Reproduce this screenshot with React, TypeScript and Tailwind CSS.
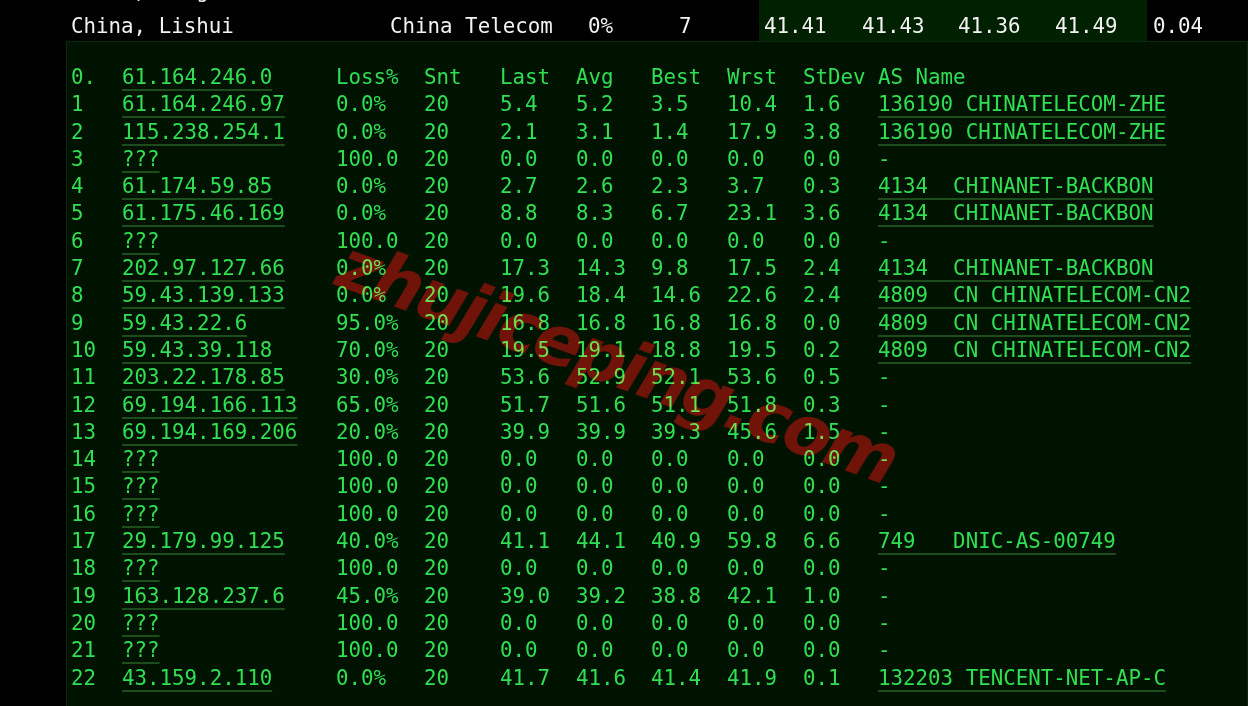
import React from 'react';

type Hop = {
  n: string;
  host: string;
  loss: string;
  snt: string;
  last: string;
  avg: string;
  best: string;
  wrst: string;
  stdev: string;
  as: string;
};

const hops: Hop[] = [
  { n: '1', host: '61.164.246.97', loss: '0.0%', snt: '20', last: '5.4', avg: '5.2', best: '3.5', wrst: '10.4', stdev: '1.6', as: '136190 CHINATELECOM-ZHE' },
  { n: '2', host: '115.238.254.1', loss: '0.0%', snt: '20', last: '2.1', avg: '3.1', best: '1.4', wrst: '17.9', stdev: '3.8', as: '136190 CHINATELECOM-ZHE' },
  { n: '3', host: '???', loss: '100.0', snt: '20', last: '0.0', avg: '0.0', best: '0.0', wrst: '0.0', stdev: '0.0', as: '' },
  { n: '4', host: '61.174.59.85', loss: '0.0%', snt: '20', last: '2.7', avg: '2.6', best: '2.3', wrst: '3.7', stdev: '0.3', as: '4134  CHINANET-BACKBON' },
  { n: '5', host: '61.175.46.169', loss: '0.0%', snt: '20', last: '8.8', avg: '8.3', best: '6.7', wrst: '23.1', stdev: '3.6', as: '4134  CHINANET-BACKBON' },
  { n: '6', host: '???', loss: '100.0', snt: '20', last: '0.0', avg: '0.0', best: '0.0', wrst: '0.0', stdev: '0.0', as: '' },
  { n: '7', host: '202.97.127.66', loss: '0.0%', snt: '20', last: '17.3', avg: '14.3', best: '9.8', wrst: '17.5', stdev: '2.4', as: '4134  CHINANET-BACKBON' },
  { n: '8', host: '59.43.139.133', loss: '0.0%', snt: '20', last: '19.6', avg: '18.4', best: '14.6', wrst: '22.6', stdev: '2.4', as: '4809  CN CHINATELECOM-CN2' },
  { n: '9', host: '59.43.22.6', loss: '95.0%', snt: '20', last: '16.8', avg: '16.8', best: '16.8', wrst: '16.8', stdev: '0.0', as: '4809  CN CHINATELECOM-CN2' },
  { n: '10', host: '59.43.39.118', loss: '70.0%', snt: '20', last: '19.5', avg: '19.1', best: '18.8', wrst: '19.5', stdev: '0.2', as: '4809  CN CHINATELECOM-CN2' },
  { n: '11', host: '203.22.178.85', loss: '30.0%', snt: '20', last: '53.6', avg: '52.9', best: '52.1', wrst: '53.6', stdev: '0.5', as: '' },
  { n: '12', host: '69.194.166.113', loss: '65.0%', snt: '20', last: '51.7', avg: '51.6', best: '51.1', wrst: '51.8', stdev: '0.3', as: '' },
  { n: '13', host: '69.194.169.206', loss: '20.0%', snt: '20', last: '39.9', avg: '39.9', best: '39.3', wrst: '45.6', stdev: '1.5', as: '' },
  { n: '14', host: '???', loss: '100.0', snt: '20', last: '0.0', avg: '0.0', best: '0.0', wrst: '0.0', stdev: '0.0', as: '' },
  { n: '15', host: '???', loss: '100.0', snt: '20', last: '0.0', avg: '0.0', best: '0.0', wrst: '0.0', stdev: '0.0', as: '' },
  { n: '16', host: '???', loss: '100.0', snt: '20', last: '0.0', avg: '0.0', best: '0.0', wrst: '0.0', stdev: '0.0', as: '' },
  { n: '17', host: '29.179.99.125', loss: '40.0%', snt: '20', last: '41.1', avg: '44.1', best: '40.9', wrst: '59.8', stdev: '6.6', as: '749   DNIC-AS-00749' },
  { n: '18', host: '???', loss: '100.0', snt: '20', last: '0.0', avg: '0.0', best: '0.0', wrst: '0.0', stdev: '0.0', as: '' },
  { n: '19', host: '163.128.237.6', loss: '45.0%', snt: '20', last: '39.0', avg: '39.2', best: '38.8', wrst: '42.1', stdev: '1.0', as: '' },
  { n: '20', host: '???', loss: '100.0', snt: '20', last: '0.0', avg: '0.0', best: '0.0', wrst: '0.0', stdev: '0.0', as: '' },
  { n: '21', host: '???', loss: '100.0', snt: '20', last: '0.0', avg: '0.0', best: '0.0', wrst: '0.0', stdev: '0.0', as: '' },
  { n: '22', host: '43.159.2.110', loss: '0.0%', snt: '20', last: '41.7', avg: '41.6', best: '41.4', wrst: '41.9', stdev: '0.1', as: '132203 TENCENT-NET-AP-C' },
];

const cols = 'grid grid-cols-[51px_214px_88px_76px_76px_75px_76px_76px_75px_1fr]';
const link = 'underline decoration-[#1d4d1d] decoration-2 underline-offset-[5px]';

const TopRow = ({ cells, h }: { cells: string[]; h: string }) => (
  <div className={`flex whitespace-pre pl-[66px] shrink-0 ${h}`}>
    <div className="w-[319px] pl-[5px]">{cells[0]}</div>
    <div className="w-[198px] pl-[5px]">{cells[1]}</div>
    <div className="w-[91px] pl-[5px]">{cells[2]}</div>
    <div className="w-[85px] pl-[5px]">{cells[3]}</div>
    <div className="w-[98px] pl-[5px] bg-[#002100]">{cells[4]}</div>
    <div className="w-[96px] pl-[5px] bg-[#002100]">{cells[5]}</div>
    <div className="w-[97px] pl-[5px] bg-[#002100]">{cells[6]}</div>
    <div className="w-[97px] pl-[5px] bg-[#002100]">{cells[7]}</div>
    <div className="flex-1 pl-[6px]">{cells[8]}</div>
  </div>
);

export default function App() {
  return (
    <div className="relative h-[706px] w-[1248px] overflow-hidden bg-black font-['DejaVu_Sans_Mono',monospace] text-[20.8px]">
      <div className="flex h-[41px] flex-col justify-end overflow-hidden text-[#f2f2f2]">
        <TopRow h="h-[30px] leading-[30px]" cells={['China, Hangzhou', 'China Telecom', '0%', '7', '41.52', '41.50', '41.44', '41.58', '0.03']} />
        <TopRow h="h-[35px] leading-[30px] [&>div]:pt-[5px]" cells={['China, Lishui', 'China Telecom', '0%', '7', '41.41', '41.43', '41.36', '41.49', '0.04']} />
      </div>

      <div className="ml-[66px] h-[700px] border border-[#0b2a0b] bg-[#001300] pl-[4px] pt-[22px] text-[#31df52] leading-[27.3px]">
        <div className={`${cols} whitespace-pre`}>
          <div>0.</div>
          <div><span className={link}>61.164.246.0</span></div>
          <div>Loss%</div>
          <div>Snt</div>
          <div>Last</div>
          <div>Avg</div>
          <div>Best</div>
          <div>Wrst</div>
          <div>StDev</div>
          <div>AS Name</div>
        </div>
        {hops.map((h) => (
          <div key={h.n} className={`${cols} whitespace-pre`}>
            <div>{h.n}</div>
            <div><span className={link}>{h.host}</span></div>
            <div>{h.loss}</div>
            <div>{h.snt}</div>
            <div>{h.last}</div>
            <div>{h.avg}</div>
            <div>{h.best}</div>
            <div>{h.wrst}</div>
            <div>{h.stdev}</div>
            <div>{h.as ? <span className={link}>{h.as}</span> : '-'}</div>
          </div>
        ))}
      </div>

      <div className="pointer-events-none absolute left-[617px] top-[362px] -translate-x-1/2 -translate-y-1/2 rotate-[20deg] whitespace-nowrap font-['DejaVu_Sans',sans-serif] text-[70px] font-bold italic leading-none tracking-[-3.5px] text-[#701208] mix-blend-lighten">
        zhujiceping.com
      </div>
    </div>
  );
}
